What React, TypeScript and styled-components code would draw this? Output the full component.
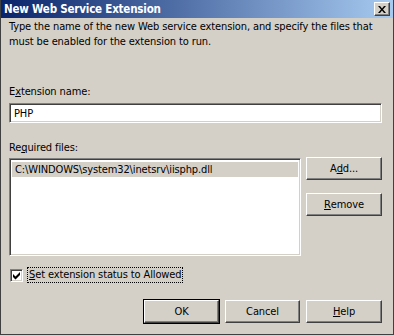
import React from "react";
import styled, { createGlobalStyle, css } from "styled-components";

const Global = createGlobalStyle`
  html, body { margin: 0; padding: 0; background: #d4d0c8; }
  body {
    font-family: "DejaVu Sans Condensed", "DejaVu Sans", Tahoma, sans-serif;
    font-stretch: condensed;
    font-size: 11px;
    letter-spacing: -0.12px;
    color: #000;
  }
`;

const Window = styled.div`
  box-sizing: border-box;
  width: 394px;
  height: 335px;
  background: #d4d0c8;
  border: 1px solid #404040;
  border-top: none;
  display: flex;
  flex-direction: column;
`;

const TitleBar = styled.div`
  height: 18px;
  display: flex;
  align-items: center;
  justify-content: space-between;
  padding: 0 3px 0 3px;
  background: linear-gradient(to right, #0a246a, #a6caf0);
`;

const Title = styled.span`
  color: #fff;
  font-weight: bold;
  font-size: 11.5px;
  letter-spacing: -0.2px;
  white-space: nowrap;
`;

const raised = css`
  box-sizing: border-box;
  background: #d4d0c8;
  border: 1px solid;
  border-color: #fff #404040 #404040 #fff;
  box-shadow: inset -1px -1px #808080, inset 1px 1px #d4d0c8;
`;

const CloseBtn = styled.div`
  ${raised};
  width: 16px;
  height: 14px;
  display: flex;
  align-items: center;
  justify-content: center;
`;

const Body = styled.div`
  flex: 1;
  display: flex;
  flex-direction: column;
  padding: 1px 11px 0 8px;
`;

const Text = styled.div<{ $mt?: number }>`
  line-height: 15px;
  margin-top: ${(p) => p.$mt ?? 0}px;
  white-space: nowrap;
`;

const sunken = css`
  box-sizing: border-box;
  background: #fff;
  border: 1px solid;
  border-color: #808080 #fff #fff #808080;
  box-shadow: inset 1px 1px #404040, inset -1px -1px #d4d0c8;
`;

const Input = styled.div`
  ${sunken};
  margin-top: 4px;
  height: 20px;
  display: flex;
  align-items: center;
  padding-left: 4px;
`;

const FilesRow = styled.div`
  display: flex;
  gap: 5px;
  margin-top: 3px;
`;

const List = styled.div`
  ${sunken};
  width: 292px;
  height: 98px;
  padding: 3px 2px;
`;

const ListItem = styled.div<{ $selected?: boolean }>`
  height: 15px;
  line-height: 15px;
  padding-left: 3px;
  background: ${(p) => (p.$selected ? "#d4d0c8" : "transparent")};
`;

const SideButtons = styled.div`
  display: flex;
  flex-direction: column;
  gap: 13px;
  margin-top: -1px;
`;

const Button = styled.div<{ $default?: boolean; $w?: number }>`
  ${raised};
  width: ${(p) => p.$w ?? 75}px;
  height: 23px;
  display: flex;
  align-items: center;
  justify-content: center;
  ${(p) =>
    p.$default &&
    css`
      outline: 1px solid #000;
      outline-offset: 0;
    `}
`;

const CheckRow = styled.div`
  margin-top: 11px;
  display: flex;
  align-items: center;
  gap: 4px;
  height: 16px;
  padding-left: 1px;
`;

const CheckBox = styled.div`
  ${sunken};
  width: 13px;
  height: 13px;
  display: flex;
  align-items: center;
  justify-content: center;
`;

const FocusLabel = styled.span`
  border: 1px dotted #000;
  padding: 0 1px;
  line-height: 14px;
`;

const Footer = styled.div`
  margin-top: 17px;
  display: flex;
  justify-content: flex-end;
  gap: 6px;
`;

const U = styled.u``;

export default function App() {
  return (
    <>
      <Global />
      <Window>
        <TitleBar>
          <Title>New Web Service Extension</Title>
          <CloseBtn>
            <svg width="8" height="7" viewBox="0 0 8 7">
              <path d="M0 0h2l2 2.5L6 0h2L5 3.5 8 7H6L4 4.5 2 7H0l3-3.5z" fill="#000" />
            </svg>
          </CloseBtn>
        </TitleBar>
        <Body>
          <Text>
            Type the name of the new Web service extension, and specify the files that
            <br />
            must be enabled for the extension to run.
          </Text>
          <Text $mt={35}>
            E<U>x</U>tension name:
          </Text>
          <Input>PHP</Input>
          <Text $mt={17}>
            Re<U>q</U>uired files:
          </Text>
          <FilesRow>
            <List>
              <ListItem $selected>C:\WINDOWS\system32\inetsrv\iisphp.dll</ListItem>
            </List>
            <SideButtons>
              <Button $w={76}>
                A<U>d</U>d...
              </Button>
              <Button $w={76}>
                <U>R</U>emove
              </Button>
            </SideButtons>
          </FilesRow>
          <CheckRow>
            <CheckBox>
              <svg width="9" height="9" viewBox="0 0 9 9">
                <path d="M1 3L3.5 5.5 8 1V4L3.5 8.5 1 6z" fill="#000" />
              </svg>
            </CheckBox>
            <FocusLabel>
              <U>S</U>et extension status to Allowed
            </FocusLabel>
          </CheckRow>
          <Footer>
            <Button $default>OK</Button>
            <Button>Cancel</Button>
            <Button $w={76}>
              <U>H</U>elp
            </Button>
          </Footer>
        </Body>
      </Window>
    </>
  );
}
